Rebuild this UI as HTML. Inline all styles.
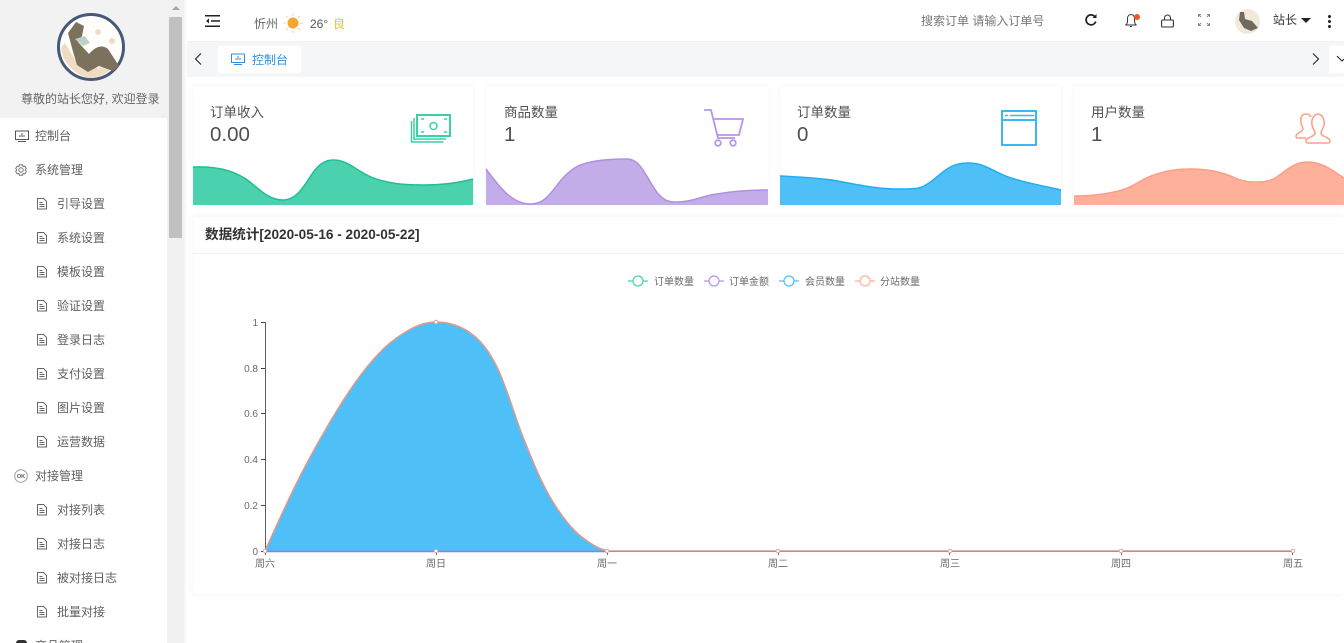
<!DOCTYPE html>
<html lang="zh"><head><meta charset="utf-8"><style>
html,body{margin:0;padding:0;width:1344px;height:643px;overflow:hidden;background:#fff;font-family:"Liberation Sans","Noto Sans CJK SC",sans-serif;color:#444}
#w{position:absolute;left:0;top:0;width:1344px;height:643px;overflow:hidden}
.a{position:absolute;white-space:nowrap}
.m{position:absolute;font-size:12px;line-height:18px;color:#606060;white-space:nowrap}
.card{position:absolute;top:86px;height:119px;background:#fff;border-radius:3px;box-shadow:0 0 6px rgba(0,0,0,.05)}
.t{font-size:13.500px;line-height:20px;color:#505050}
.n{font-size:20.500px;line-height:24px;color:#505050}
svg{position:absolute;overflow:visible}
.tk{font-size:10px;fill:#6a6a6a;font-family:"Liberation Sans","Noto Sans CJK SC",sans-serif}
</style></head><body><div id="w">
<!-- sidebar -->
<div class="a" style="left:0;top:0;width:167px;height:118px;background:#f2f2f2"></div>
<div class="a" style="left:167px;top:0;width:17px;height:643px;background:#f1f1f1"></div>
<div class="a" style="left:169px;top:17px;width:13px;height:221px;background:#c1c1c1"></div>
<div class="a" style="left:172px;top:6px;width:0;height:0;border:4px solid transparent;border-bottom-color:#a3a3a3;border-top:0"></div>
<div class="a" style="left:184px;top:0;width:3px;height:643px;background:linear-gradient(90deg,#f4f4f4,#fff)"></div>
<svg style="left:57px;top:13px" width="68" height="68" viewBox="0 0 68 68">
<circle cx="34" cy="34" r="32.500" fill="#fffefb" stroke="#46597a" stroke-width="3"/>
<path d="M4 34C5 48 16 62 33 65c10 0 18-5 25-13L40 55 20 50 8 30Z" fill="#efdcc2"/>
<path d="M11 20 19 9l8 4-2 10-4 6 11 12c6-7 13-10 19-5l11 17-6 5-14-5-11 6-11-7-5-17Z" fill="#7b715d"/>
<path d="M18 26l10-3 5 7-7 3Z" fill="#bcd2c7"/><circle cx="41" cy="19" r="2.800" fill="#eddac8"/><circle cx="55" cy="28" r="3" fill="#eddac8"/>
</svg>
<div class="a" style="left:21px;top:90px;font-size:12px;line-height:18px;color:#666">尊敬的站长您好, 欢迎登录</div>

<svg style="left:15px;top:130px" width="14" height="13" viewBox="0 0 14 13" fill="none" stroke="#555"><rect x=".5" y="1" width="13" height="8.500"/><path d="M3 11.500h8M5 7V5M7 7V3M9 7V5"/></svg>
<div class="m" style="left:35px;top:127px">控制台</div>
<svg style="left:14px;top:163px" width="14" height="14" viewBox="0 0 14 14" fill="none" stroke="#777"><path d="M5.500 .8h3l.6 1.700 1.700-.4 1.500 2.400-1.100 1.500 1.100 1.500-1.500 2.400-1.700-.4-.6 1.700h-3l-.6-1.700-1.700.4L1.700 7.500l1.100-1.500-1.100-1.500 1.500-2.400 1.700.4Z" transform="translate(0 1)"/><circle cx="7" cy="7" r="2.200"/></svg>
<div class="m" style="left:35px;top:161px">系统管理</div>
<svg style="left:14px;top:469px" width="14" height="14" viewBox="0 0 14 14"><circle cx="7" cy="7" r="6.300" fill="none" stroke="#999"/><text x="7" y="9" font-size="5.500" font-weight="700" text-anchor="middle" fill="#555" font-family="Liberation Sans">OK</text></svg>
<div class="m" style="left:35px;top:467px">对接管理</div>

<div class="m" style="left:57px;top:195px">引导设置</div>
<div class="m" style="left:57px;top:229px">系统设置</div>
<div class="m" style="left:57px;top:263px">模板设置</div>
<div class="m" style="left:57px;top:297px">验证设置</div>
<div class="m" style="left:57px;top:331px">登录日志</div>
<div class="m" style="left:57px;top:365px">支付设置</div>
<div class="m" style="left:57px;top:399px">图片设置</div>
<div class="m" style="left:57px;top:433px">运营数据</div>
<div class="m" style="left:57px;top:501px">对接列表</div>
<div class="m" style="left:57px;top:535px">对接日志</div>
<div class="m" style="left:57px;top:569px">被对接日志</div>
<div class="m" style="left:57px;top:603px">批量对接</div>
<div class="m" style="left:35px;top:637px">商品管理</div>
<div class="a" style="left:16px;top:640px;width:11px;height:6px;background:#333;border-radius:3px"></div>
<svg style="left:37px;top:198px" width="10" height="442" viewBox="0 0 10 442" fill="none" stroke="#666"><defs><path id="d" d="M.5.5h6l3 3v7.500H.5ZM2.500 4.500h3M2.500 6.500h5M2.500 8.500h5"/></defs>
<use href="#d"/><use href="#d" y="34"/><use href="#d" y="68"/><use href="#d" y="102"/><use href="#d" y="136"/><use href="#d" y="170"/><use href="#d" y="204"/><use href="#d" y="238"/><use href="#d" y="306"/><use href="#d" y="340"/><use href="#d" y="374"/><use href="#d" y="408"/></svg>

<!-- header -->
<div class="a" style="left:187px;top:41px;width:1157px;height:1px;background:#f0f0f0"></div>
<svg style="left:205px;top:15px" width="15" height="12" viewBox="0 0 15 12" fill="none" stroke="#222" stroke-width="1.500"><path d="M0 .8h15M6 6h9M0 11.200h15"/><path d="M4 3.500 1 6l3 2.500Z" fill="#222" stroke="none"/></svg>
<div class="a" style="left:254px;top:15px;font-size:12px;line-height:18px;color:#666">忻州</div>
<svg style="left:283px;top:13px" width="20" height="20" viewBox="0 0 20 20"><circle cx="10" cy="10" r="5.500" fill="#f4a62e"/><path d="M10 0v3M10 17v3M0 10h3M17 10h3M3 3l2 2M15 15l2 2M3 17l2-2M15 5l2-2" stroke="#f8d49a"/></svg>
<div class="a" style="left:310px;top:15px;font-size:12px;line-height:18px;color:#555">26°</div>
<div class="a" style="left:333px;top:15px;font-size:12px;line-height:18px;color:#e8c52a">良</div>
<div class="a" style="left:921px;top:12px;font-size:12px;line-height:18px;color:#777">搜索订单 请输入订单号</div>
<svg style="left:1084px;top:13px" width="14" height="14" viewBox="0 0 14 14" fill="none" stroke="#222" stroke-width="1.700"><path d="M11.800 8.500A5 5 0 1 1 10.500 3.200L12 4.500"/><path d="M12.500 1v4h-4Z" stroke="none" fill="#222"/></svg>
<svg style="left:1124px;top:13px" width="18" height="15" viewBox="0 0 18 15" fill="none" stroke="#333"><path d="M1.500 12c2-1 2-3 2-6s1.500-4.500 3.500-4.500S10.500 3 10.500 6s0 5 2 6ZM6 13.500h2"/><circle cx="13" cy="4" r="3" fill="#f0552a" stroke="none"/></svg>
<svg style="left:1161px;top:14px" width="13" height="14" viewBox="0 0 13 14" fill="none" stroke="#333" stroke-width="1.100"><rect x=".6" y="6" width="11.800" height="7" rx="1"/><path d="M3.500 6V4a3 3 0 0 1 6 0v2"/></svg>
<svg style="left:1198px;top:14px" width="12" height="12" viewBox="0 0 12 12" fill="none" stroke="#888"><path d="M.5 3V.5H3M9 .5h2.500V3M.5 9v2.500H3M9 11.500h2.500V9M1 1l2 2M11 1 9 3M1 11l2-2M11 11 9 9"/></svg>
<svg style="left:1235px;top:9px" width="25" height="25" viewBox="0 0 25 25"><circle cx="12.500" cy="12.500" r="12.500" fill="#f1eadb"/><path d="M5 3l4 0 1 7 7 2 6 7-7 3-7-3-5-8Z" fill="#6f6a5d"/></svg>
<div class="a" style="left:1273px;top:11px;font-size:12px;line-height:18px;color:#333">站长</div>
<div class="a" style="left:1301px;top:18px;width:0;height:0;border:5px solid transparent;border-top-color:#222;border-bottom:0"></div>
<div class="a" style="left:1328px;top:15px;width:3px;height:3px;background:#222;box-shadow:0 5px #222,0 10px #222;border-radius:50%"></div>

<!-- tabs -->
<div class="a" style="left:187px;top:42px;width:1157px;height:35px;background:#f5f6f8"></div>
<svg style="left:194px;top:53px" width="8" height="12" viewBox="0 0 8 12" fill="none" stroke="#222" stroke-width="1.100"><path d="M7 .5 1.500 6 7 11.500"/></svg>
<div class="a" style="left:218px;top:46px;width:83px;height:27px;background:#fff;border-radius:2px"></div>
<svg style="left:231px;top:53px" width="14" height="13" viewBox="0 0 14 13" fill="none" stroke="#2f8ede"><rect x=".5" y="1" width="13" height="8.500"/><path d="M3 11.500h8M5 7V5M7 7V3M9 7V5"/></svg>
<div class="a" style="left:252px;top:51px;font-size:12px;line-height:18px;color:#2f8ede">控制台</div>
<svg style="left:1312px;top:53px" width="8" height="12" viewBox="0 0 8 12" fill="none" stroke="#222" stroke-width="1.100"><path d="M1 .5 6.500 6 1 11.500"/></svg>
<div class="a" style="left:1329px;top:46px;width:15px;height:27px;background:#fff"></div>
<svg style="left:1336px;top:55px" width="8" height="7" fill="none" stroke="#222"><path d="M1 1l5 5 2-2"/></svg>

<!-- stat cards -->
<div class="card" style="left:193px;width:280px"></div>
<div class="card" style="left:486px;width:282px"></div>
<div class="card" style="left:780px;width:281px"></div>
<div class="card" style="left:1074px;width:270px"></div>
<svg style="left:0;top:0" width="1344" height="210" viewBox="0 0 1344 210">
<path d="M193 167C215 166 235 170 250 182C262 192 270 200 283 200C297 200 304 186 312 174C319 164 325 160 333 160C348 160 355 170 371 177C388 184 405 185 423 185C442 185 458 183 473 179V205H193Z" fill="#4bd1ae"/>
<path d="M193 167C215 166 235 170 250 182C262 192 270 200 283 200C297 200 304 186 312 174C319 164 325 160 333 160C348 160 355 170 371 177C388 184 405 185 423 185C442 185 458 183 473 179" fill="none" stroke="#22bd97" stroke-width="1.500"/>
<path d="M486 169C500 188 512 204 531 204C552 204 555 178 578 166C592 160 610 159 627 159C648 159 650 202 674 202C695 202 700 196 717 194C735 191 750 190 768 190V205H486Z" fill="#c3ade9"/>
<path d="M486 169C500 188 512 204 531 204C552 204 555 178 578 166C592 160 610 159 627 159C648 159 650 202 674 202C695 202 700 196 717 194C735 191 750 190 768 190" fill="none" stroke="#b08fe3" stroke-width="1.500"/>
<path d="M780 176C800 177 815 178 832 180C855 184 875 189 898 189C912 189 918 189 924 186C940 178 945 163 968 163C985 163 992 171 1008 177C1025 183 1040 185 1061 190V205H780Z" fill="#4ebff7"/>
<path d="M780 176C800 177 815 178 832 180C855 184 875 189 898 189C912 189 918 189 924 186C940 178 945 163 968 163C985 163 992 171 1008 177C1025 183 1040 185 1061 190" fill="none" stroke="#22adf0" stroke-width="1.500"/>
<path d="M1074 196C1090 196 1108 194 1122 190C1135 186 1140 180 1151 176C1165 171 1175 169 1191 169C1205 169 1217 171 1228 175C1238 179 1243 182 1253 182C1262 182 1268 182 1275 178C1285 172 1293 162 1307 162C1322 162 1332 170 1344 178V205H1074Z" fill="#ffb09b"/>
<path d="M1074 196C1090 196 1108 194 1122 190C1135 186 1140 180 1151 176C1165 171 1175 169 1191 169C1205 169 1217 171 1228 175C1238 179 1243 182 1253 182C1262 182 1268 182 1275 178C1285 172 1293 162 1307 162C1322 162 1332 170 1344 178" fill="none" stroke="#fb9f88" stroke-width="1.500"/>
<!-- cash -->
<g fill="none" stroke="#3ccfa8"><rect x="417" y="115" width="33" height="21" stroke-width="2"/><path d="M414 118v21h32M411.500 121v21h32" stroke-width="1.500"/><circle cx="433.500" cy="126" r="3.500" stroke-width="1.500"/><path d="M421 119h3M444 119h3M421 132h3M444 132h3" stroke-width="1.500"/></g>
<!-- cart -->
<g fill="none" stroke="#b795e8" stroke-width="1.800"><path d="M704 110h7l7 28h17"/><path d="M713 119h30l-4 16h-22"/><circle cx="718" cy="143" r="2.800"/><circle cx="733" cy="143" r="2.800"/></g>
<!-- window -->
<g fill="none" stroke="#3cb7f2" stroke-width="2"><rect x="1002" y="111" width="34" height="34"/><path d="M1002 120h34"/><path d="M1010 115.500h24M1005 115.500h3" stroke-width="1.600"/></g>
<!-- users -->
<g fill="none" stroke="#fb9f88" stroke-width="1.500"><path d="M1306 141c0-4 9-4 9-8 0-2-2-4-3-8-1-7 3-11 6-11s7 4 6 11c-1 4-3 6-3 8 0 4 9 4 9 8 0 2-1 2-2 2h-20c-1 0-2 0-2-2Z"/><path d="M1306 138h-8c-1 0-2 0-2-2 0-3 7-4 7-7 0-2-2-3-2-7-1-6 2-8 5-8 2 0 4 1 5 3"/></g>
</svg>
<div class="a t" style="left:210px;top:103px">订单收入</div><div class="a n" style="left:210px;top:123px">0.00</div>
<div class="a t" style="left:504px;top:103px">商品数量</div><div class="a n" style="left:504px;top:123px">1</div>
<div class="a t" style="left:797px;top:103px">订单数量</div><div class="a n" style="left:797px;top:123px">0</div>
<div class="a t" style="left:1091px;top:103px">用户数量</div><div class="a n" style="left:1091px;top:123px">1</div>

<!-- chart card -->
<div class="card" style="left:193px;top:217px;width:1151px;height:377px;box-shadow:0 0 8px rgba(0,0,0,.05)"></div>
<div class="a" style="left:193px;top:253px;width:1151px;height:1px;background:#f2f2f2"></div>
<div class="a" style="left:205px;top:225px;font-size:13.600px;line-height:19px;font-weight:700;color:#333">数据统计[2020-05-16 - 2020-05-22]</div>
<svg style="left:0;top:0" width="1344" height="643" viewBox="0 0 1344 643">
<g fill="none" stroke-width="1.200">
<path d="M628 281h20" stroke="#4bd1ae"/><circle cx="638" cy="281" r="5" fill="#fff" stroke="#4bd1ae"/>
<path d="M704 281h20" stroke="#b795e8"/><circle cx="714" cy="281" r="5" fill="#fff" stroke="#b795e8"/>
<path d="M779 281h20" stroke="#4ebff7"/><circle cx="789" cy="281" r="5" fill="#fff" stroke="#4ebff7"/>
<path d="M855 281h20" stroke="#ffb09b"/><circle cx="865" cy="281" r="5" fill="#fff" stroke="#ffb09b"/>
</g>
<g class="tk"><text x="654" y="285">订单数量</text><text x="729" y="285">订单金额</text><text x="805" y="285">会员数量</text><text x="880" y="285">分站数量</text></g>
<path d="M265.500 322V551.500H1293" fill="none" stroke="#444" stroke-width="1" opacity=".85"/>
<path d="M261 322.500h4M261 368.500h4M261 413.500h4M261 459.500h4M261 505.500h4M261 551.500h4" stroke="#444"/>
<path d="M265.500 551v4M436.500 551v4M607.500 551v4M778.500 551v4M949.500 551v4M1121.500 551v4M1292.500 551v4" stroke="#666"/>
<path d="M265 551C279 520 293 489 307 463C323 433 340 404 357 380C368 365 379 352 390 343C405 331 420 322 436 322C450 322 463 327 473 335C481 341 489 351 497 367C506 385 515 417 523 437C531 457 540 480 550 497C560 514 571 529 583 538C592 545 600 549 607 551Z" fill="#4ebff7"/>
<path d="M265 551.500H607" stroke="#9a78e0" stroke-width="1.500"/>
<path d="M265 551C279 520 293 489 307 463C323 433 340 404 357 380C368 365 379 352 390 343C405 331 420 322 436 322C450 322 463 327 473 335C481 341 489 351 497 367C506 385 515 417 523 437C531 457 540 480 550 497C560 514 571 529 583 538C592 545 600 549 607 551H1293" fill="none" stroke="#e09a8c" stroke-width="1.500"/>
<g fill="#fff" stroke="#d9a79e"><circle cx="265" cy="551" r="1.800"/><circle cx="436" cy="322" r="1.800"/><circle cx="436" cy="551" r="1.800"/><circle cx="607" cy="551" r="1.800"/><circle cx="778" cy="551" r="1.800"/><circle cx="950" cy="551" r="1.800"/><circle cx="1121" cy="551" r="1.800"/><circle cx="1293" cy="551" r="1.800"/></g>
<g class="tk" text-anchor="end"><text x="258" y="326">1</text><text x="258" y="372">0.8</text><text x="258" y="417">0.6</text><text x="258" y="463">0.4</text><text x="258" y="509">0.2</text><text x="258" y="555">0</text></g>
<g class="tk" text-anchor="middle"><text x="265" y="567">周六</text><text x="436" y="567">周日</text><text x="607" y="567">周一</text><text x="778" y="567">周二</text><text x="950" y="567">周三</text><text x="1121" y="567">周四</text><text x="1293" y="567">周五</text></g>
</svg>
</div></body></html>
